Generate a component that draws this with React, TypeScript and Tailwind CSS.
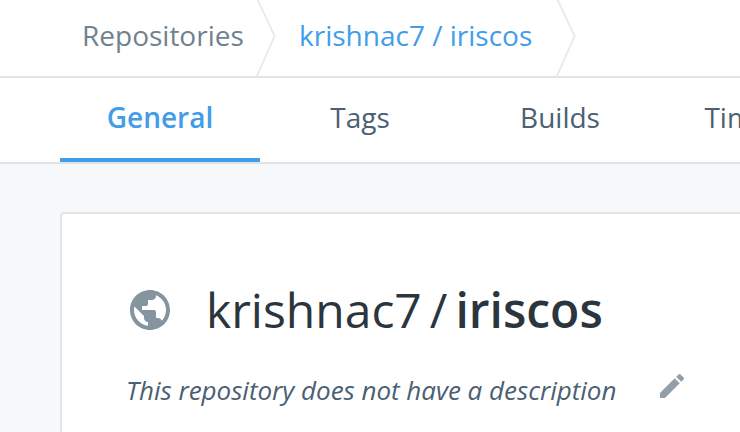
import React from "react";

function Chevron() {
  return (
    <svg width="20" height="78" viewBox="0 0 20 78" fill="none" className="shrink-0">
      <path d="M0.8 -2 L18.6 36 L0.8 76.5" stroke="#e9e9e9" strokeWidth="1.8" />
    </svg>
  );
}

export default function App() {
  return (
    <div className="flex h-[432px] w-[740px] flex-col overflow-hidden bg-[#f6f8fa] font-['Open_Sans',sans-serif]">
      <nav className="flex h-[78px] shrink-0 border-b-2 border-[#dfe4e8] bg-white pl-[82px] text-[28px] leading-[70px] whitespace-nowrap">
        <span className="w-[174px] text-[#6f8290]">Repositories</span>
        <Chevron />
        <span className="ml-[23px] w-[257px] text-[#429de8]">krishnac7 / iriscos</span>
        <Chevron />
      </nav>
      <div className="flex h-[86px] shrink-0 border-b-2 border-[#dfe3e7] bg-white pl-[60px] text-center text-[28px] leading-[78px] whitespace-nowrap text-[#4b6072]">
        <div className="w-[200px] shrink-0 border-b-4 border-[#429de8] font-semibold text-[#429de8]">General</div>
        <div className="w-[200px] shrink-0">Tags</div>
        <div className="w-[200px] shrink-0">Builds</div>
        <div className="w-[200px] shrink-0">Timeline</div>
      </div>
      <main className="flex grow pt-12 pl-[60px]">
        <section className="w-[800px] shrink-0 rounded-tl border-t-2 border-l-2 border-[#e0e4e7] bg-white pt-[60px] pl-[64px]">
          <div className="flex h-[72px] items-center whitespace-nowrap">
            <svg width="48" height="48" viewBox="0 0 24 24" fill="#85959f" className="shrink-0">
              <path d="M12 2C6.48 2 2 6.48 2 12s4.48 10 10 10 10-4.48 10-10S17.52 2 12 2zm-1 17.93c-3.95-.49-7-3.85-7-7.93 0-.62.08-1.21.21-1.79L9 15v1c0 1.1.9 2 2 2v1.93zm6.9-2.54c-.26-.81-1-1.39-1.9-1.39h-1v-3c0-.55-.45-1-1-1H8v-2h2c.55 0 1-.45 1-1V7h2c1.1 0 2-.9 2-2v-.41c2.93 1.19 5 4.06 5 7.41 0 2.08-.8 3.97-2.1 5.39z" />
            </svg>
            <h1 className="ml-[32px] flex text-[48px] leading-[72px] text-[#2b353d]">
              <span>krishnac7</span><span className="ml-[8px]">/</span>
              <span className="ml-[8px] font-semibold">iriscos</span>
            </h1>
          </div>
          <div className="mt-[22px] flex h-[44px] items-start">
            <p className="w-[530px] text-[26px] leading-[44px] tracking-[-0.02px] whitespace-nowrap text-[#4b6072] italic">This repository does not have a description</p>
            <svg width="32" height="32" viewBox="0 0 24 24" fill="#929fa9" className="mt-[2px] shrink-0">
              <path d="M3 17.25V21h3.75L17.81 9.94l-3.75-3.75L3 17.25zM20.71 7.04a1 1 0 0 0 0-1.41l-2.34-2.34a1 1 0 0 0-1.41 0l-1.83 1.83 3.75 3.75 1.83-1.83z" />
            </svg>
          </div>
        </section>
      </main>
    </div>
  );
}
